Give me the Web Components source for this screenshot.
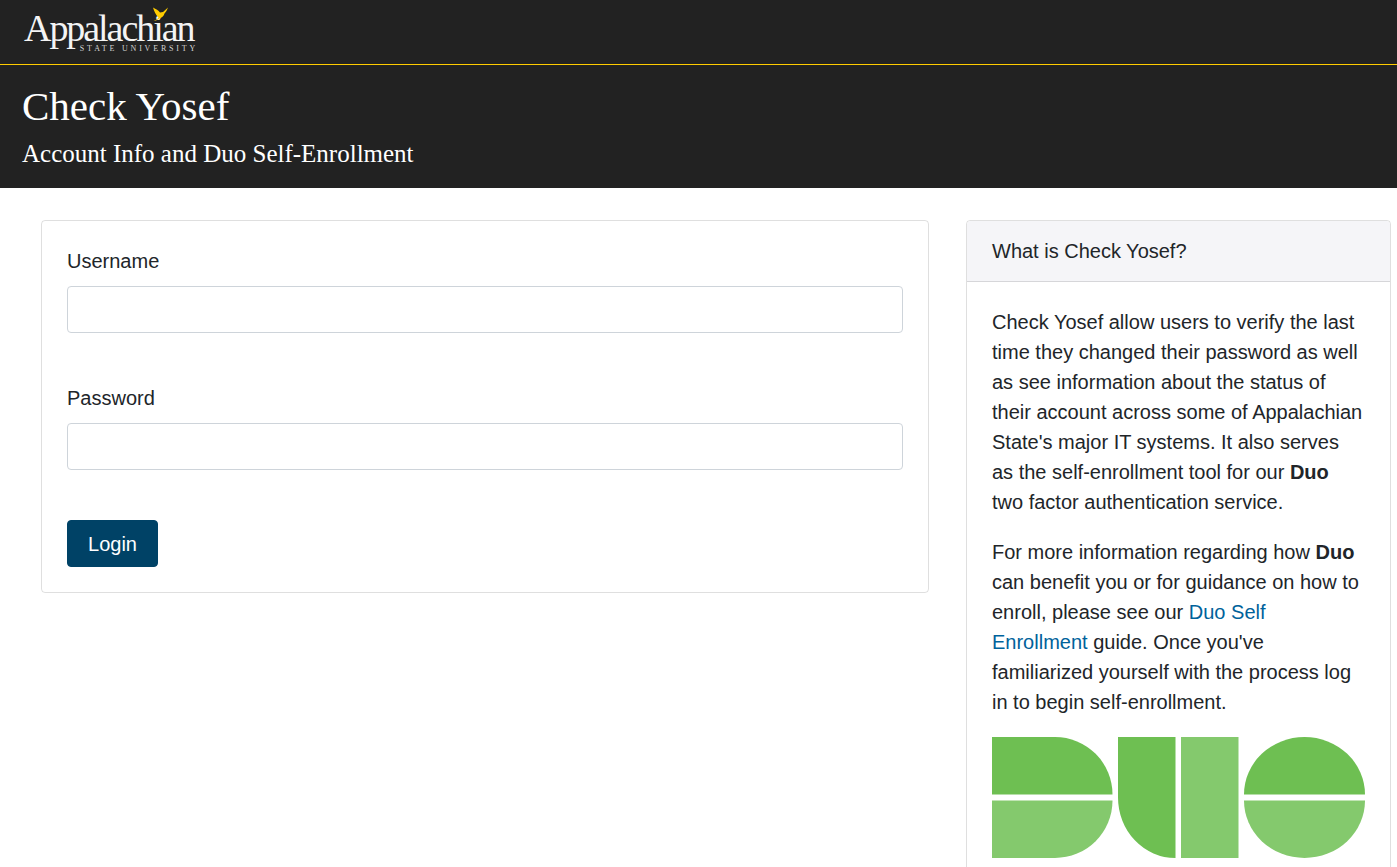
<!DOCTYPE html>
<html lang="en">
<head>
<meta charset="utf-8">
<title>Check Yosef</title>
<style>
  html, body { margin: 0; background: #fff; }
  body { font: 20px/30px "Liberation Sans", Arial, sans-serif; color: #212529; }
  info-card a { color: #00629b; text-decoration: none; }
</style>
</head>
<body>
<site-header title="Check Yosef" subtitle="Account Info and Duo Self-Enrollment"></site-header>
<page-main>
  <login-card slot="left"></login-card>
  <info-card slot="right" heading="What is Check Yosef?">
    <p>Check Yosef allow users to verify the last time they changed their password as well as see information about the status of their account across some of Appalachian State's major IT systems. It also serves as the self-enrollment tool for our <b>Duo</b> two factor authentication service.</p>
    <p>For more information regarding how <b>Duo</b> can benefit you or for guidance on how to enroll, please see our <a href="#">Duo Self Enrollment</a> guide. Once you've familiarized yourself with the process log in to begin self-enrollment.</p>
    <duo-logo></duo-logo>
  </info-card>
</page-main>

<script>
// top bar with the university logo and the page title
class SiteHeader extends HTMLElement {
  constructor() {
    super();
    this.attachShadow({ mode: 'open' });
  }
  connectedCallback() {
    const title = this.getAttribute('title') || '';
    const subtitle = this.getAttribute('subtitle') || '';
    this.shadowRoot.innerHTML = `
      <style>
        :host { display: block; background: #222; color: #fff; font-family: "Liberation Serif", "Times New Roman", serif; }
        .brand { height: 64px; padding-left: 24px; border-bottom: 1px solid #ffcc00; box-sizing: content-box; }
        .logo { position: relative; display: inline-block; width: 172px; height: 64px; }
        .name { display: block; padding-top: 9px; font-size: 38px; line-height: 38px; letter-spacing: -2.05px; color: #f4f4f4; white-space: nowrap; }
        .state { position: absolute; right: 0; top: 45px; font-size: 8px; line-height: 8px; letter-spacing: 2.8px; margin-right: -2px; color: #d4d4d4; white-space: nowrap; }
        svg { position: absolute; left: 128px; top: 7px; }
        .titles { box-sizing: border-box; height: 123px; padding: 17px 22px 0; }
        h1 { margin: 0; font-size: 41px; line-height: 48px; font-weight: 400; }
        h2 { margin: 9px 0 0; font-size: 25px; line-height: 30px; font-weight: 400; }
      </style>
      <div class="brand">
        <span class="logo">
          <span class="name">Appalachian</span>
          <span class="state">STATE UNIVERSITY</span>
          <svg width="17" height="15" viewBox="0 0 17 15"><path fill="#ffcc00" d="M1.500 14 C4 13 5.500 12 6.500 10.500 C4 8 2 4 1 .5 C4 2 6.500 3.500 8 5.500 L11 5 L16 .5 C15 3 14 5 12.500 6.500 C12 9 9.500 11 7.500 11.500 C5.500 13 3.500 14 1.500 14 Z"/></svg>
        </span>
      </div>
      <div class="titles">
        <h1>${title}</h1>
        <h2>${subtitle}</h2>
      </div>`;
  }
}

// two columns under the header
class PageMain extends HTMLElement {
  constructor() {
    super();
    this.attachShadow({ mode: 'open' });
    this.shadowRoot.innerHTML = `
      <style>
        :host { display: grid; grid-template-columns: 888px 425px; column-gap: 37px; padding: 32px 6px 0 41px; align-items: start; }
      </style>
      <slot name="left"></slot>
      <slot name="right"></slot>`;
  }
}

class LoginField extends HTMLElement {
  constructor() {
    super();
    this.attachShadow({ mode: 'open' });
  }
  connectedCallback() {
    const label = this.getAttribute('label') || '';
    const type = this.getAttribute('type') || 'text';
    this.shadowRoot.innerHTML = `
      <style>
        :host { display: block; margin-bottom: 50px; }
        label { display: block; margin-bottom: 10px; }
        input { display: block; width: 100%; height: 47px; box-sizing: border-box; border: 1px solid #ced4da; border-radius: 4px; background: #fff; padding: 6px 12px; font: inherit; outline: none; }
      </style>
      <label>${label}</label>
      <input type="${type}">`;
  }
}

class LoginCard extends HTMLElement {
  constructor() {
    super();
    this.attachShadow({ mode: 'open' });
    this.shadowRoot.innerHTML = `
      <style>
        :host { display: block; border: 1px solid rgba(0,0,0,.125); border-radius: 4px; padding: 25px; }
        button { display: block; width: 91px; height: 47px; padding: 0; border: 1px solid #004266; border-radius: 4px; background: #004266; color: #fff; font: inherit; }
      </style>
      <login-field label="Username"></login-field>
      <login-field label="Password" type="password"></login-field>
      <button type="button">Login</button>`;
  }
}

class InfoCard extends HTMLElement {
  constructor() {
    super();
    this.attachShadow({ mode: 'open' });
  }
  connectedCallback() {
    const heading = this.getAttribute('heading') || '';
    this.shadowRoot.innerHTML = `
      <style>
        :host { display: block; border: 1px solid rgba(0,0,0,.125); border-radius: 4px; }
        header { height: 61px; box-sizing: border-box; padding: 15px 25px; background: #f5f5f8; border-bottom: 1px solid rgba(0,0,0,.125); border-radius: 4px 4px 0 0; }
        .body { padding: 25px; }
        ::slotted(p) { margin: 0 0 20px; }
      </style>
      <header>${heading}</header>
      <div class="body"><slot></slot></div>`;
  }
}

class DuoLogo extends HTMLElement {
  constructor() {
    super();
    this.attachShadow({ mode: 'open' });
    this.shadowRoot.innerHTML = `
      <style>
        :host { display: block; margin-top: 20px; }
        svg { display: block; width: 373px; height: 121px; }
      </style>
      <svg viewBox="0 0 373 121">
        <path fill="#6ebf52" d="M0 0 H63 A57.500 57.500 0 0 1 120.500 57.500 H0 Z"/>
        <path fill="#84c96d" d="M0 63.500 H120.500 A57.500 57.500 0 0 1 63 121 H0 Z"/>
        <path fill="#6ebf52" d="M126 0 H183.500 V121 A57.500 60.500 0 0 1 126 60.500 Z"/>
        <rect fill="#84c96d" x="189" y="0" width="57.500" height="121"/>
        <path fill="#6ebf52" d="M252 57.500 A60.500 57.500 0 0 1 373 57.500 Z"/>
        <path fill="#84c96d" d="M252 63.500 H373 A60.500 57.500 0 0 1 252 63.500 Z"/>
      </svg>`;
  }
}

customElements.define('site-header', SiteHeader);
customElements.define('page-main', PageMain);
customElements.define('login-field', LoginField);
customElements.define('login-card', LoginCard);
customElements.define('info-card', InfoCard);
customElements.define('duo-logo', DuoLogo);
</script>
</body>
</html>
